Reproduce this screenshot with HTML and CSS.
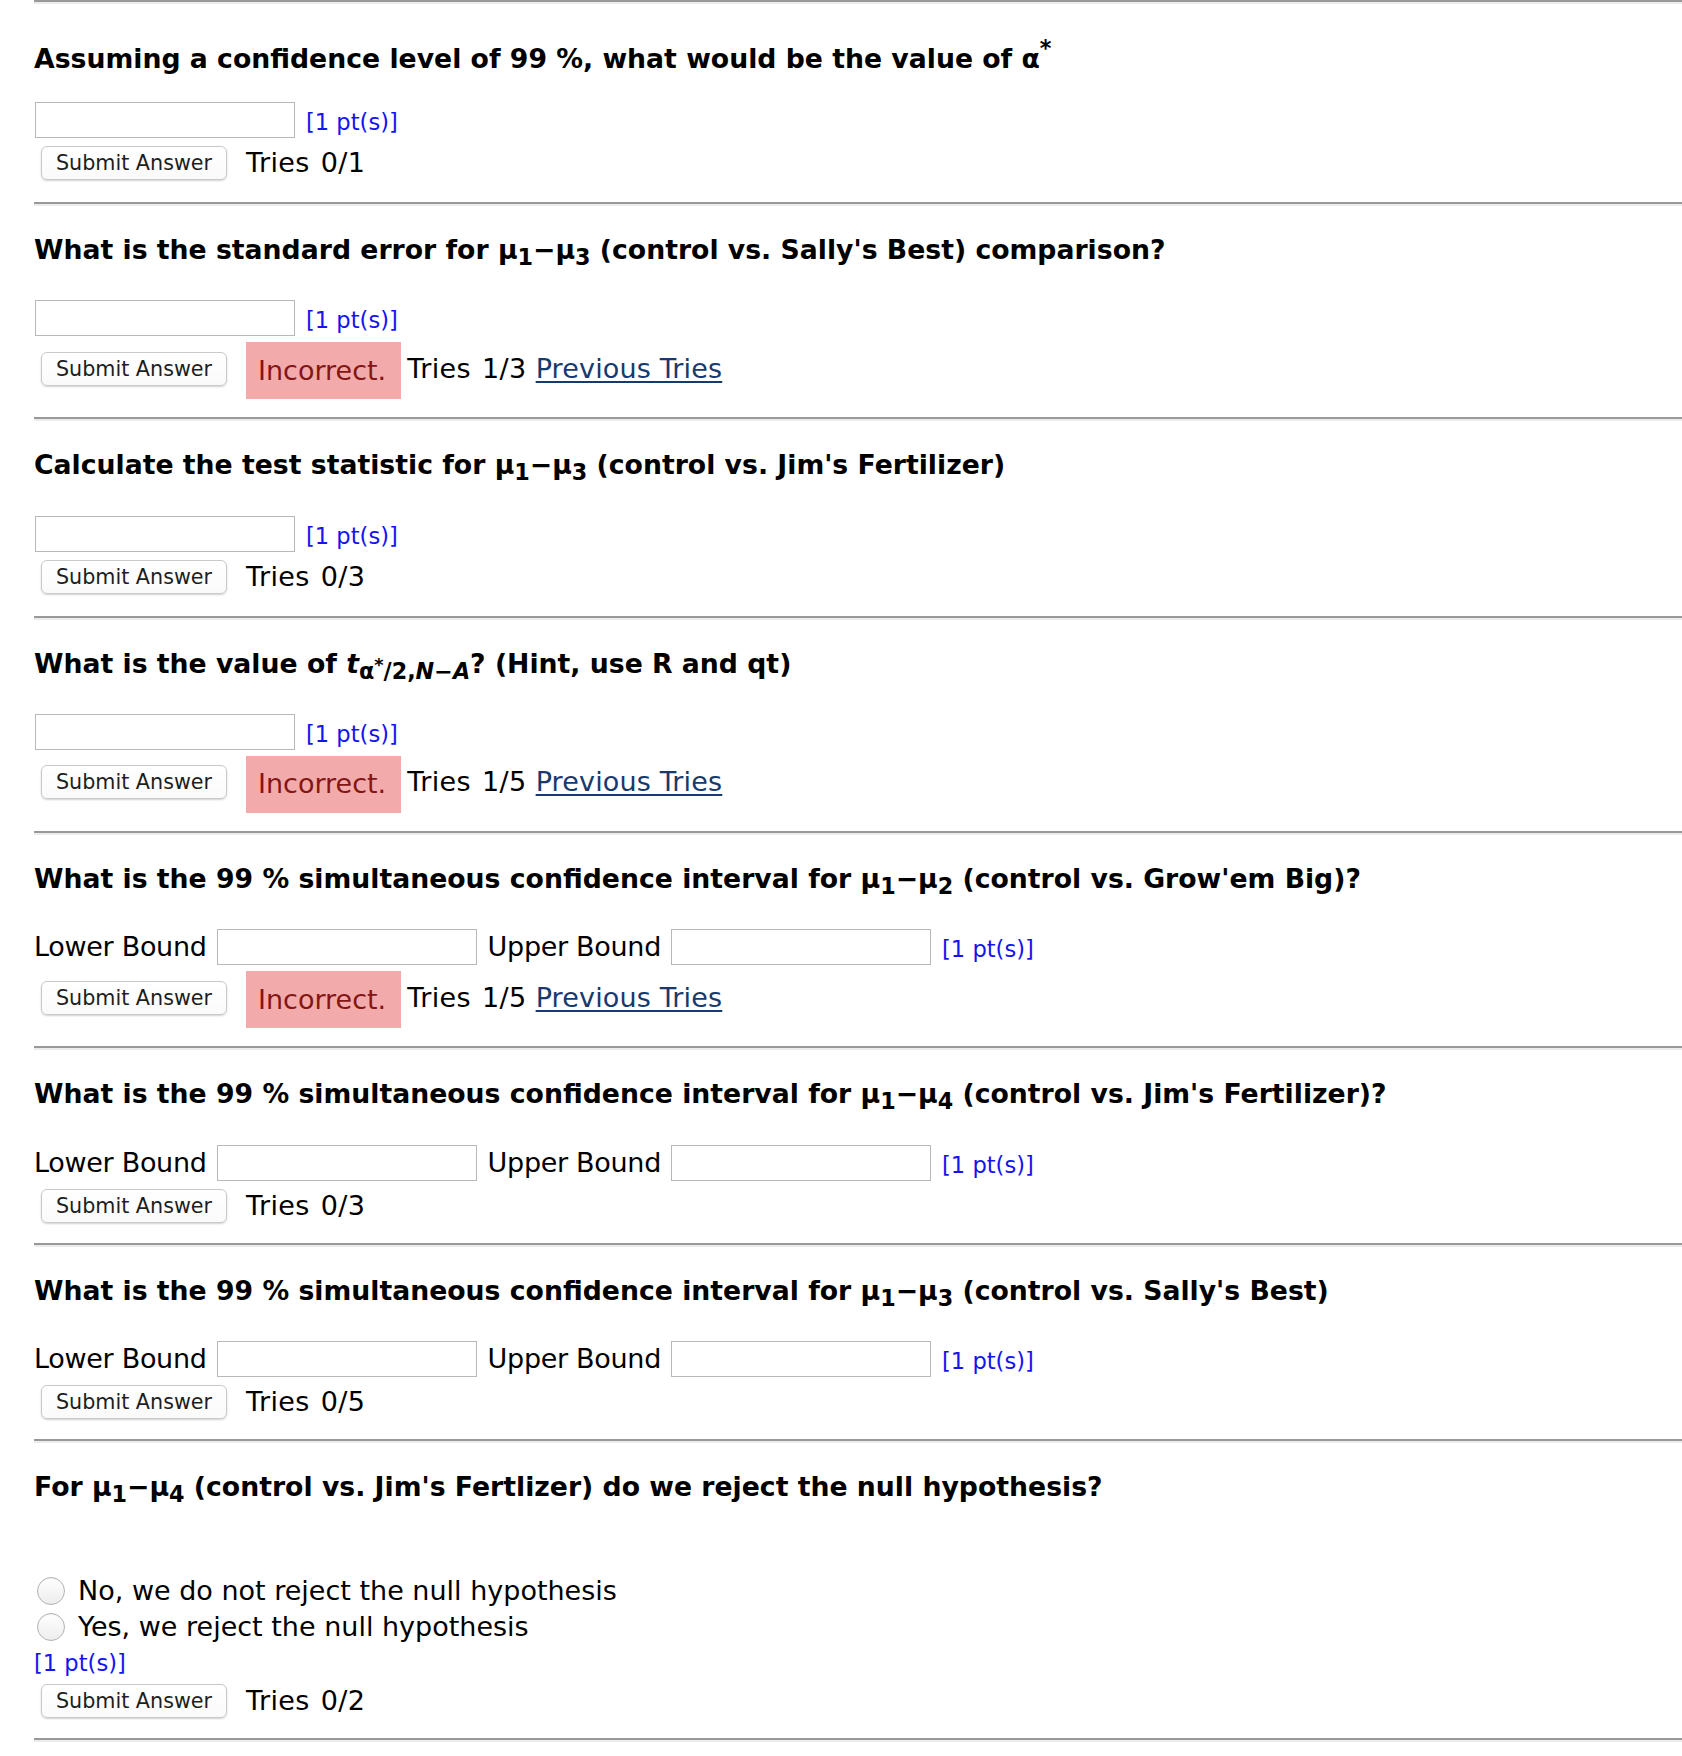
FILE: index.html
```html
<!DOCTYPE html>
<html lang="en">
<head>
<meta charset="utf-8">
<title>Problem set</title>
<link rel="stylesheet" href="styles.css">
</head>
<body>
<main class="page">

  <section class="q">
    <hr class="rule">
    <h3 class="qt">Assuming a confidence level of 99 %, what would be the value of α<sup>*</sup></h3>
    <div class="ans"><input class="box" type="text"><span class="pts">[1 pt(s)]</span></div>
    <div class="act"><button class="btn" type="button">Submit Answer</button><span class="tries">Tries 0/1</span></div>
  </section>

  <section class="q">
    <hr class="rule">
    <h3 class="qt">What is the standard error for μ<sub>1</sub>−μ<sub>3</sub> (control vs. Sally's Best) comparison?</h3>
    <div class="ans"><input class="box" type="text"><span class="pts">[1 pt(s)]</span></div>
    <div class="act has-bad"><button class="btn" type="button">Submit Answer</button><span class="bad">Incorrect.</span><span class="tries">Tries 1/3</span><a class="prev" href="#">Previous Tries</a></div>
  </section>

  <section class="q">
    <hr class="rule">
    <h3 class="qt">Calculate the test statistic for μ<sub>1</sub>−μ<sub>3</sub> (control vs. Jim's Fertilizer)</h3>
    <div class="ans"><input class="box" type="text"><span class="pts">[1 pt(s)]</span></div>
    <div class="act"><button class="btn" type="button">Submit Answer</button><span class="tries">Tries 0/3</span></div>
  </section>

  <section class="q">
    <hr class="rule">
    <h3 class="qt">What is the value of <i>t</i><sub>α<sup>*</sup>/2,<i>N</i>−<i>A</i></sub>? (Hint, use R and qt)</h3>
    <div class="ans"><input class="box" type="text"><span class="pts">[1 pt(s)]</span></div>
    <div class="act has-bad"><button class="btn" type="button">Submit Answer</button><span class="bad">Incorrect.</span><span class="tries">Tries 1/5</span><a class="prev" href="#">Previous Tries</a></div>
  </section>

  <section class="q">
    <hr class="rule">
    <h3 class="qt">What is the 99 % simultaneous confidence interval for μ<sub>1</sub>−μ<sub>2</sub> (control vs. Grow'em Big)?</h3>
    <div class="ans"><label class="lbl">Lower Bound</label><input class="box" type="text"><label class="lbl">Upper Bound</label><input class="box" type="text"><span class="pts">[1 pt(s)]</span></div>
    <div class="act has-bad"><button class="btn" type="button">Submit Answer</button><span class="bad">Incorrect.</span><span class="tries">Tries 1/5</span><a class="prev" href="#">Previous Tries</a></div>
  </section>

  <section class="q q-pair">
    <hr class="rule">
    <h3 class="qt">What is the 99 % simultaneous confidence interval for μ<sub>1</sub>−μ<sub>4</sub> (control vs. Jim's Fertilizer)?</h3>
    <div class="ans"><label class="lbl">Lower Bound</label><input class="box" type="text"><label class="lbl">Upper Bound</label><input class="box" type="text"><span class="pts">[1 pt(s)]</span></div>
    <div class="act"><button class="btn" type="button">Submit Answer</button><span class="tries">Tries 0/3</span></div>
  </section>

  <section class="q q-pair">
    <hr class="rule">
    <h3 class="qt">What is the 99 % simultaneous confidence interval for μ<sub>1</sub>−μ<sub>3</sub> (control vs. Sally's Best)</h3>
    <div class="ans"><label class="lbl">Lower Bound</label><input class="box" type="text"><label class="lbl">Upper Bound</label><input class="box" type="text"><span class="pts">[1 pt(s)]</span></div>
    <div class="act"><button class="btn" type="button">Submit Answer</button><span class="tries">Tries 0/5</span></div>
  </section>

  <section class="q q-last">
    <hr class="rule">
    <h3 class="qt">For μ<sub>1</sub>−μ<sub>4</sub> (control vs. Jim's Fertlizer) do we reject the null hypothesis?</h3>
    <div class="opts">
      <label class="opt"><input class="radio" type="radio" name="q8">No, we do not reject the null hypothesis</label>
      <label class="opt"><input class="radio" type="radio" name="q8">Yes, we reject the null hypothesis</label>
    </div>
    <div class="pts-line"><span class="pts">[1 pt(s)]</span></div>
    <div class="act"><button class="btn" type="button">Submit Answer</button><span class="tries">Tries 0/2</span></div>
    <hr class="rule">
  </section>

</main>
</body>
</html>
```

FILE: styles.css
```css
* { box-sizing: border-box; }

html, body {
  margin: 0;
  padding: 0;
  background: #ffffff;
}

body {
  font-family: "DejaVu Sans", Verdana, sans-serif;
  font-size: 27px;
  color: #000000;
}

.page {
  padding-left: 34px;
}

.rule {
  display: block;
  height: 0;
  margin: 0;
  border: 0;
  border-top: 2px solid #999999;
  border-bottom: 2px solid #ececec;
}

.q {
  padding-bottom: 22px;
}

.q-pair {
  padding-bottom: 20px;
}

.q-last {
  padding-bottom: 0;
}

.q-last .act {
  margin-bottom: 20px;
}

.qt {
  margin: 29px 0 0 0;
  font-size: 26.7px;
  font-weight: bold;
  line-height: 30px;
  white-space: nowrap;
}

.qt sub,
.qt sup {
  font-size: smaller;
}

.qt > sup {
  vertical-align: 12px;
}

.qt sub sup {
  font-size: 80%;
}

.ans {
  display: flex;
  align-items: center;
  height: 36px;
  margin-top: 28px;
}

.box {
  width: 260px;
  height: 36px;
  margin: 0 1px;
  padding: 2px 6px;
  border: 1px solid #b8b8b8;
  background: #ffffff;
  font: inherit;
  font-size: 22px;
  outline: none;
}

.lbl {
  margin-right: 9px;
  line-height: 30px;
  letter-spacing: -0.3px;
}

.box + .lbl {
  margin-left: 10px;
}

.pts {
  margin-left: 10px;
  padding-top: 4px;
  color: #1414f0;
  font-size: 22.6px;
  line-height: 26px;
}

.act {
  display: flex;
  align-items: center;
  margin-top: 8px;
  min-height: 34px;
  line-height: 30px;
  white-space: nowrap;
}

.has-bad {
  padding-bottom: 2px;
}

.btn {
  width: 186px;
  height: 34px;
  margin: 0 19px 0 7px;
  padding: 0;
  border: 1px solid #c9c9c9;
  border-radius: 6px;
  background: linear-gradient(#ffffff, #fafafa);
  box-shadow: 0 1px 2px rgba(0, 0, 0, 0.18);
  color: #1e1e1e;
  font-family: "DejaVu Sans", Verdana, sans-serif;
  font-size: 20.7px;
  line-height: 32px;
}

.bad {
  display: flex;
  align-items: center;
  height: 57px;
  margin: -2px 6px -6px 0;
  padding: 0 15px 0 12px;
  background: #f2abaa;
  color: #841515;
}

.tries {
  color: #000000;
  letter-spacing: 0.4px;
  word-spacing: 2px;
}

.prev {
  margin-left: 9px;
  color: #163a6d;
  letter-spacing: 0.15px;
  text-decoration: underline;
  text-underline-offset: 3px;
}

.opts {
  margin-top: 64px;
}

.opt {
  display: flex;
  align-items: center;
  height: 36px;
  line-height: 36px;
}

.radio {
  appearance: none;
  -webkit-appearance: none;
  width: 28px;
  height: 28px;
  margin: 0 13px 0 3px;
  border: 1px solid #b3b3b3;
  border-radius: 50%;
  background: linear-gradient(#ffffff, #ededed);
  box-shadow: inset 0 1px 1px rgba(0, 0, 0, 0.06);
}

.pts-line {
  margin-top: 5px;
  height: 26px;
  display: flex;
}

.pts-line .pts {
  margin-left: 0;
  padding-top: 0;
}
```
